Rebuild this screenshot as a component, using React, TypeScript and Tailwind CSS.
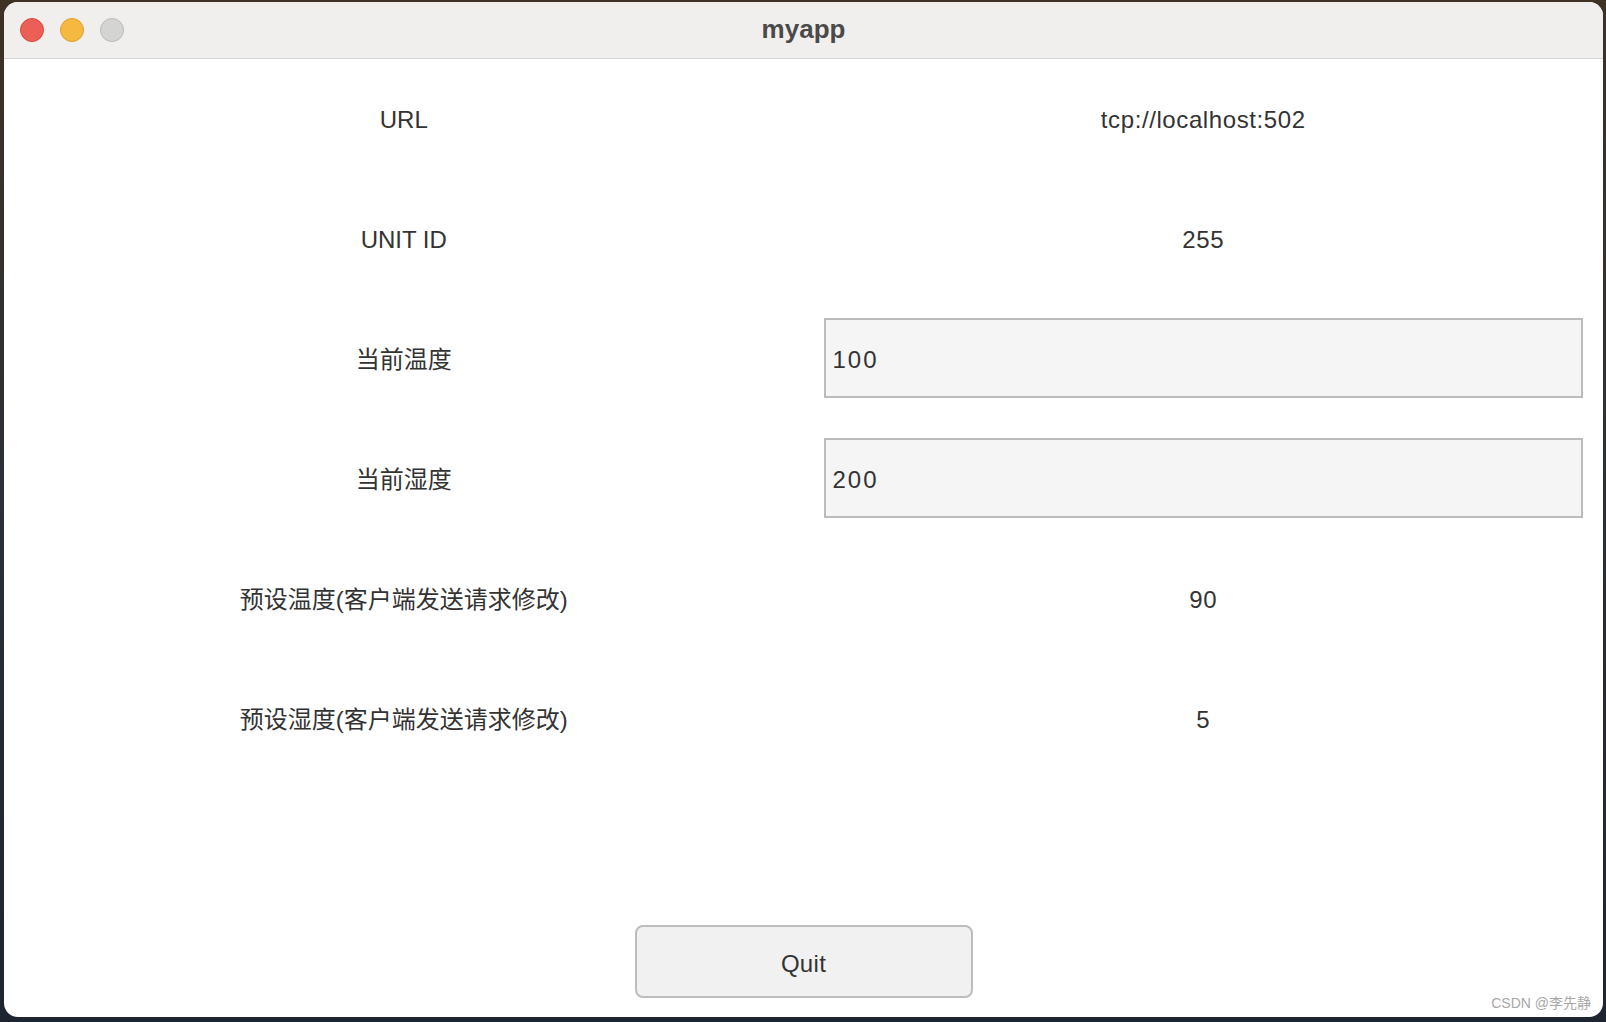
import React from 'react';

const rows: { label: string; value: string; input?: boolean }[] = [
  { label: 'URL', value: 'tcp://localhost:502' },
  { label: 'UNIT ID', value: '255' },
  { label: '当前温度', value: '100', input: true },
  { label: '当前湿度', value: '200', input: true },
  { label: '预设温度(客户端发送请求修改)', value: '90' },
  { label: '预设湿度(客户端发送请求修改)', value: '5' },
];

const font = { fontFamily: '"Liberation Sans", "Noto Sans CJK SC", sans-serif' };

export default function App() {
  return (
    <div
      className="relative w-[1606px] h-[1022px] overflow-hidden bg-gradient-to-b from-[#3e3224] via-[#2a2f36] to-[#1c2530] pt-[2px] pl-[4px]"
      style={font}
    >
      {/* Window */}
      <div className="flex flex-col w-[1599px] h-[1015px] bg-white rounded-[14px] overflow-hidden">
        {/* Title bar */}
        <div className="relative flex items-center justify-center h-[57px] shrink-0 bg-[#f0efed] border-b border-[#d3d3d3]">
          <div className="absolute left-[16px] top-[16px] flex gap-[16px]">
            <span className="w-[24px] h-[24px] rounded-full bg-[#ec5f57] border border-[#d8483f]" />
            <span className="w-[24px] h-[24px] rounded-full bg-[#f5b942] border border-[#dd9f2a]" />
            <span className="w-[24px] h-[24px] rounded-full bg-[#d4d4d2] border border-[#b9b9b7]" />
          </div>
          <span className="text-[26px] font-bold text-[#4a4a4a] -mt-[2px]">myapp</span>
        </div>

        {/* Rows */}
        <div className="grid grid-cols-2 pt-[1px]">
          {rows.map((r) => (
            <React.Fragment key={r.label}>
              <div className="h-[120px] flex items-center justify-center text-[24px] text-[#333]">
                {r.label}
              </div>
              <div className="h-[120px] flex items-center justify-center px-[20px]">
                {r.input ? (
                  <input
                    defaultValue={r.value}
                    className="w-full h-[80px] mb-[5px] bg-[#f5f5f5] border-2 border-[#bcbcbc] pl-[7px] pt-[4px] text-[24px] tracking-[2px] text-[#333] outline-none"
                    style={font}
                  />
                ) : (
                  <span className="text-[24px] text-[#333] tracking-[0.6px]">{r.value}</span>
                )}
              </div>
            </React.Fragment>
          ))}
        </div>

        <div className="flex-1" />

        <div className="flex justify-center pb-[19px]">
          <button
            className="w-[338px] h-[73px] pt-[5px] rounded-[8px] border-2 border-[#bdbdbd] bg-[#f1f1f1] text-[24px] text-[#333] tracking-[0.3px]"
            style={font}
          >
            Quit
          </button>
        </div>
      </div>

      {/* Watermark */}
      <span className="absolute right-[15px] bottom-[8px] text-[14px] text-[#a8a8a8]">
        CSDN @李先静
      </span>
    </div>
  );
}
